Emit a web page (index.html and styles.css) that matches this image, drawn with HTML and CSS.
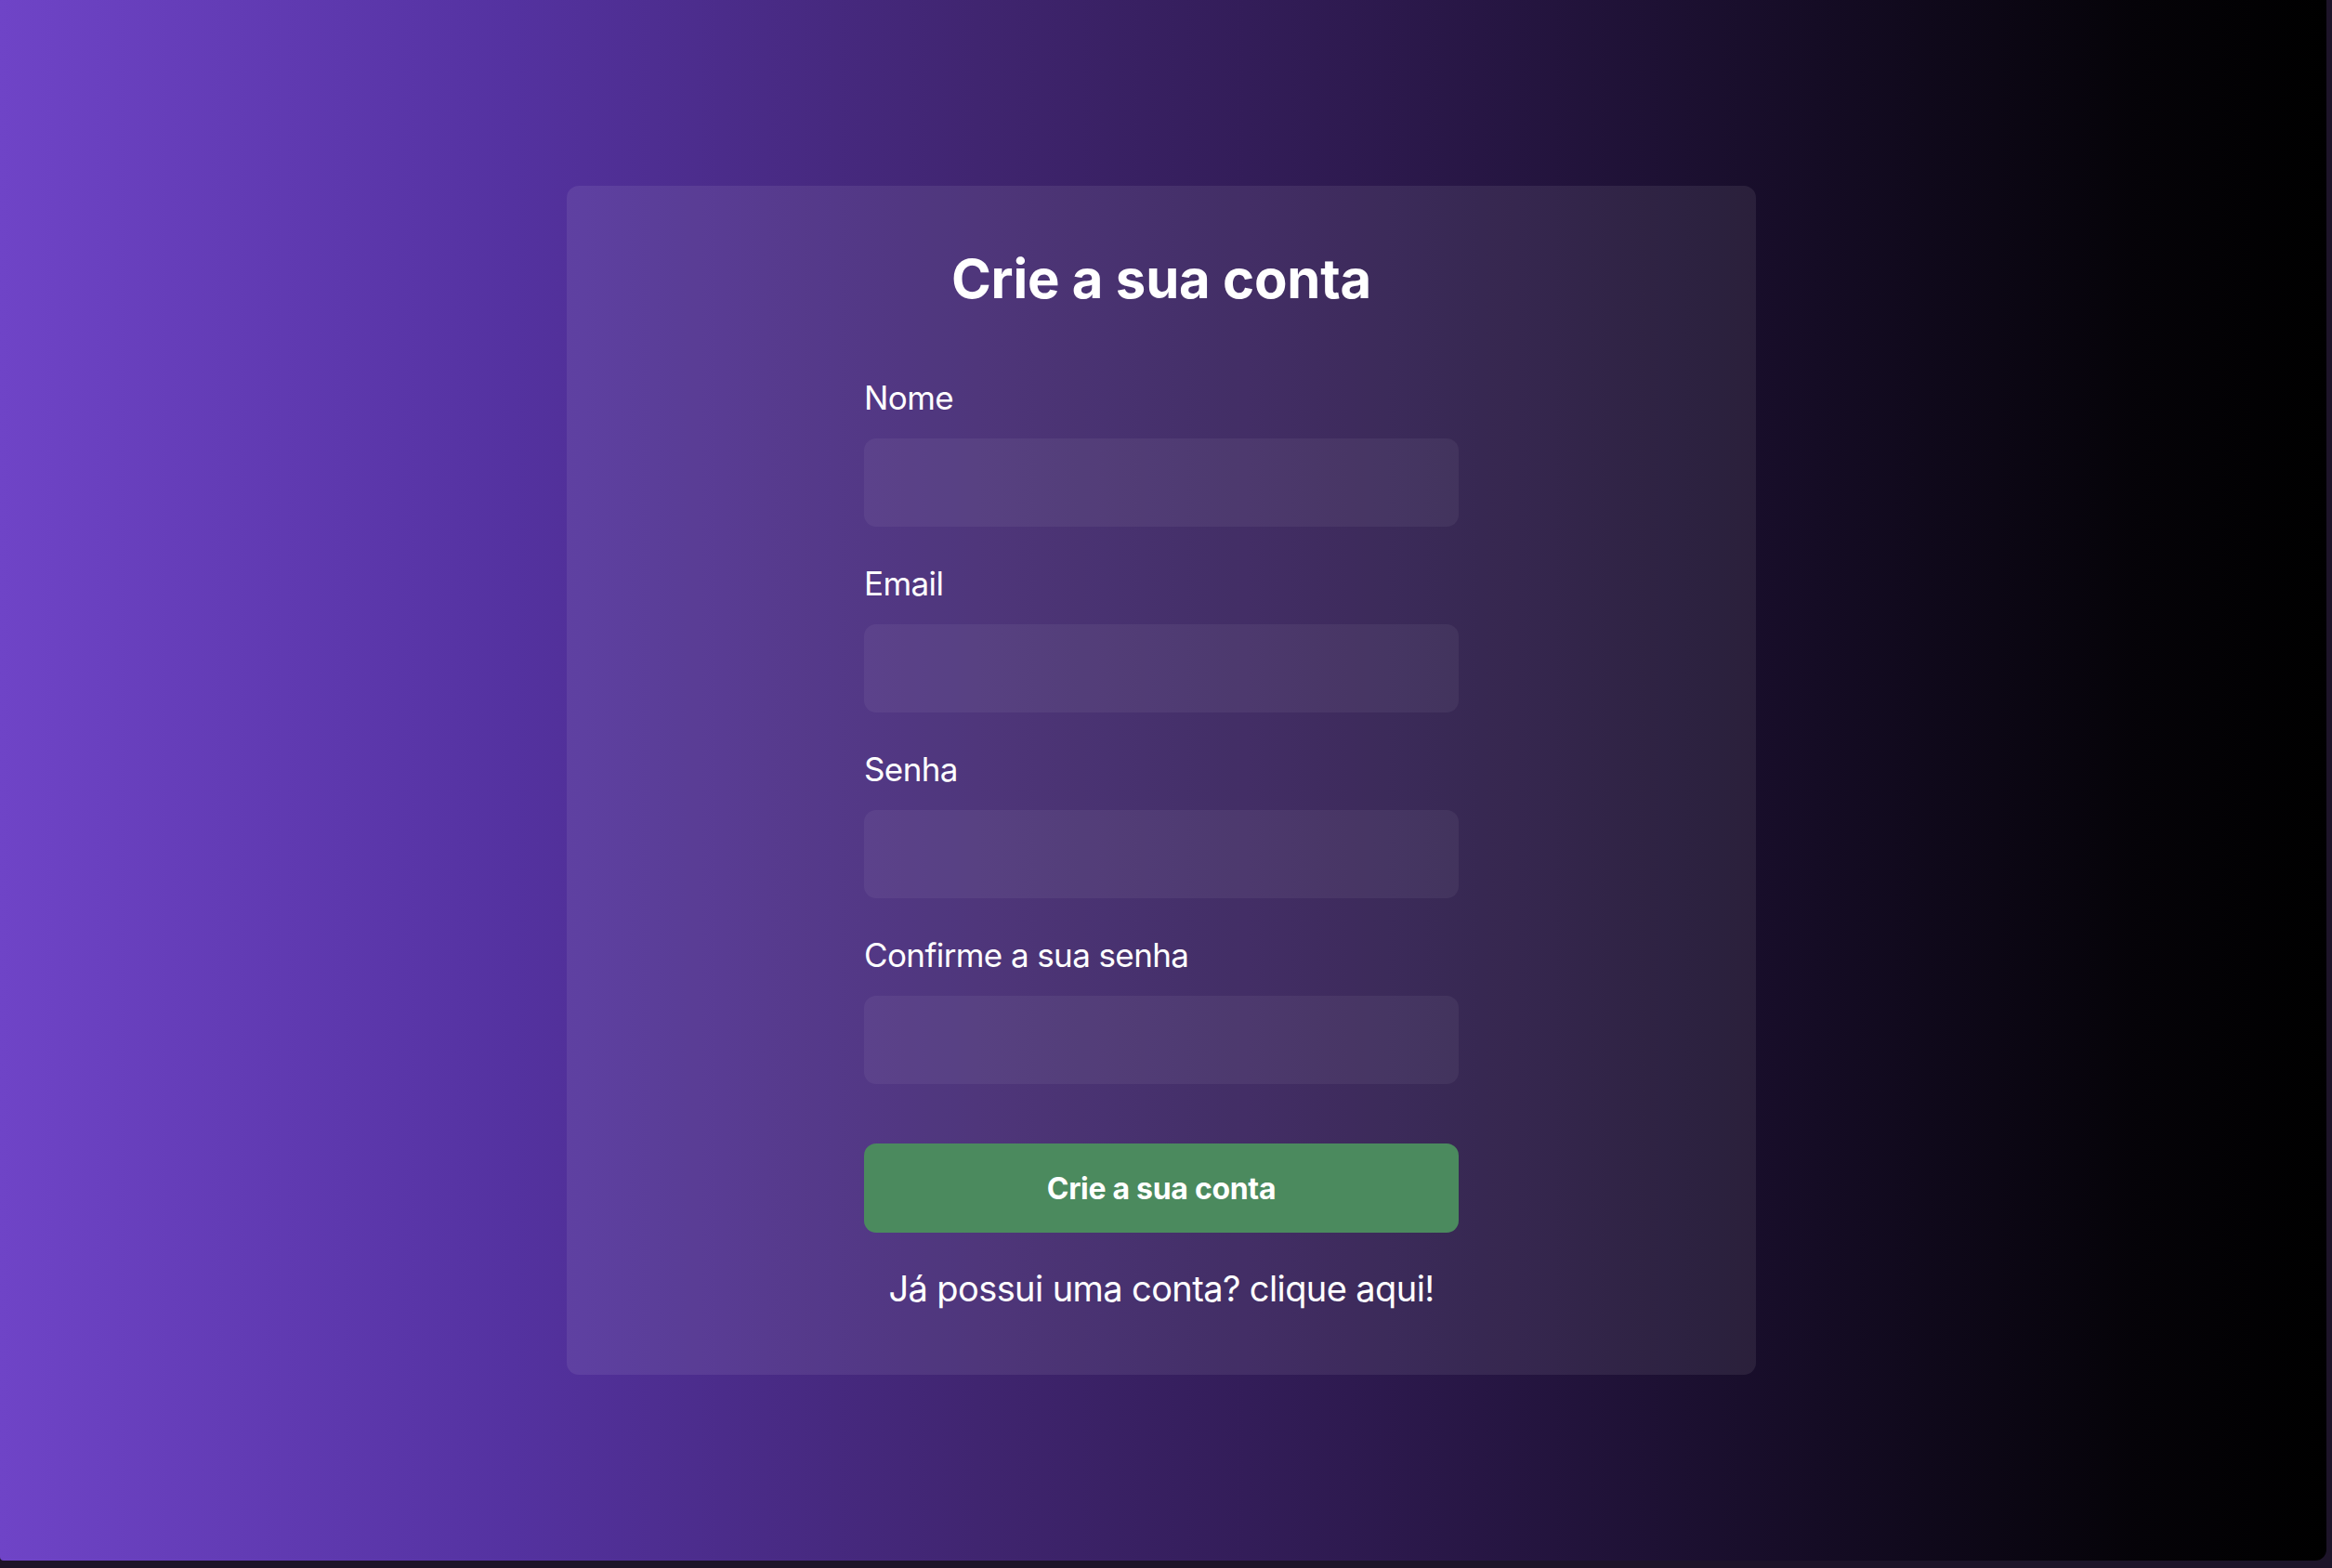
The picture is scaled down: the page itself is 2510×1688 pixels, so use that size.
FILE: index.html
```html
<!DOCTYPE html>
<html lang="pt-BR">
<head>
<meta charset="utf-8">
<title>Crie a sua conta</title>
<link rel="stylesheet" href="styles.css">
</head>
<body>
<div class="app">
  <main class="card">
    <h1 class="title">Crie a sua conta</h1>
    <form class="form">
      <div class="field">
        <label class="label" for="nome">Nome</label>
        <input class="input" id="nome" type="text">
      </div>
      <div class="field">
        <label class="label" for="email">Email</label>
        <input class="input" id="email" type="email">
      </div>
      <div class="field">
        <label class="label" for="senha">Senha</label>
        <input class="input" id="senha" type="password">
      </div>
      <div class="field">
        <label class="label" for="confirma">Confirme a sua senha</label>
        <input class="input" id="confirma" type="password">
      </div>
      <button class="button" type="button">Crie a sua conta</button>
      <p class="login">Já possui uma conta? clique aqui!</p>
    </form>
  </main>
</div>
</body>
</html>
```

FILE: styles.css
```css
html {
  background: #1d1429;
}
body {
  margin: 0;
  font-family: Inter, "Noto Sans", "Liberation Sans", sans-serif;
  color: #fff;
}
.app {
  box-sizing: border-box;
  width: 2504px;
  height: 1680px;
  padding-right: 4px;
  border-radius: 0 0 12px 4px;
  background: linear-gradient(90deg, #6f44c7 0%, #5432a0 22%, #402570 42%, #2e1a50 58%, #150c25 78%, #050308 92%, #000 100%);
  display: flex;
  align-items: center;
  justify-content: center;
}
.card {
  box-sizing: border-box;
  width: 1280px;
  height: 1280px;
  padding-top: 64px;
  border-radius: 13px;
  background: rgba(255, 255, 255, 0.08);
  display: flex;
  flex-direction: column;
  align-items: center;
}
.title {
  margin: 0;
  font-size: 58px;
  line-height: 72px;
  font-weight: 700;
  letter-spacing: -0.2px;
}
.form {
  width: 640px;
  margin-top: 68px;
  display: flex;
  flex-direction: column;
}
.field {
  display: flex;
  flex-direction: column;
  margin-bottom: 37px;
}
.label {
  font-size: 35px;
  line-height: 48px;
  letter-spacing: -0.6px;
  margin-bottom: 20px;
}
.input {
  box-sizing: border-box;
  height: 95px;
  border: none;
  border-radius: 13px;
  background: rgba(255, 255, 255, 0.055);
  outline: none;
  color: #fff;
  font: inherit;
  font-size: 32px;
  padding: 0 24px;
}
.button {
  margin-top: 27px;
  height: 96px;
  border: none;
  border-radius: 13px;
  background: #4b8a5e;
  color: #fff;
  font-family: inherit;
  font-size: 32px;
  font-weight: 700;
  letter-spacing: -0.3px;
}
.login {
  margin: 32px 0 0;
  text-align: center;
  font-size: 38px;
  line-height: 56px;
  letter-spacing: -0.6px;
}
```
